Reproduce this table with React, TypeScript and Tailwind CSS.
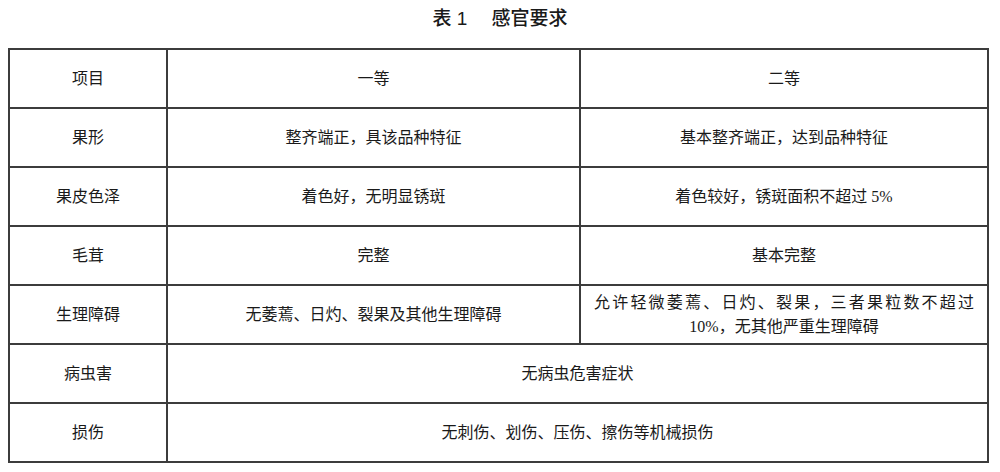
const rows: { item: string; first: string; second?: string }[] = [
  { item: "果形", first: "整齐端正，具该品种特征", second: "基本整齐端正，达到品种特征" },
  { item: "果皮色泽", first: "着色好，无明显锈斑", second: "着色较好，锈斑面积不超过 5%" },
  { item: "毛茸", first: "完整", second: "基本完整" },
  {
    item: "生理障碍",
    first: "无萎蔫、日灼、裂果及其他生理障碍",
    second: "允许轻微萎蔫、日灼、裂果，三者果粒数不超过 10%，无其他严重生理障碍",
  },
  { item: "病虫害", first: "无病虫危害症状" },
  { item: "损伤", first: "无刺伤、划伤、压伤、擦伤等机械损伤" },
];

const App = () => {
  return (
    <div className="w-[1000px] h-[472px] bg-white text-[#1a1a1a] font-['Liberation_Serif','Noto_Sans_CJK_SC',serif]">
      <h1 className="h-[40px] pt-[7px] text-center text-[19px] leading-[24px] font-['Liberation_Sans','Noto_Sans_CJK_SC',sans-serif] font-medium">
        表 1<span className="ml-[24px]">感官要求</span>
      </h1>
      <table className="ml-[8px] mt-[8px] w-[981px] border-collapse table-fixed text-[16px] leading-[24px]">
        <colgroup>
          <col className="w-[158px]" />
          <col className="w-[413px]" />
          <col />
        </colgroup>
        <tbody>
          <tr className="h-[59px]">
            <td className="border-2 border-[#3c3c3c] text-center">项目</td>
            <td className="border-2 border-[#3c3c3c] text-center">一等</td>
            <td className="border-2 border-[#3c3c3c] text-center">二等</td>
          </tr>
          {rows.map((row) => (
            <tr key={row.item} className="h-[59px]">
              <td className="border-2 border-[#3c3c3c] text-center">{row.item}</td>
              {row.second ? (
                <>
                  <td className="border-2 border-[#3c3c3c] text-center">{row.first}</td>
                  <td className="border-2 border-[#3c3c3c] px-[13px] text-justify [text-align-last:center]">
                    {row.second}
                  </td>
                </>
              ) : (
                <td colSpan={2} className="border-2 border-[#3c3c3c] text-center">
                  {row.first}
                </td>
              )}
            </tr>
          ))}
        </tbody>
      </table>
    </div>
  );
};

export default App;
